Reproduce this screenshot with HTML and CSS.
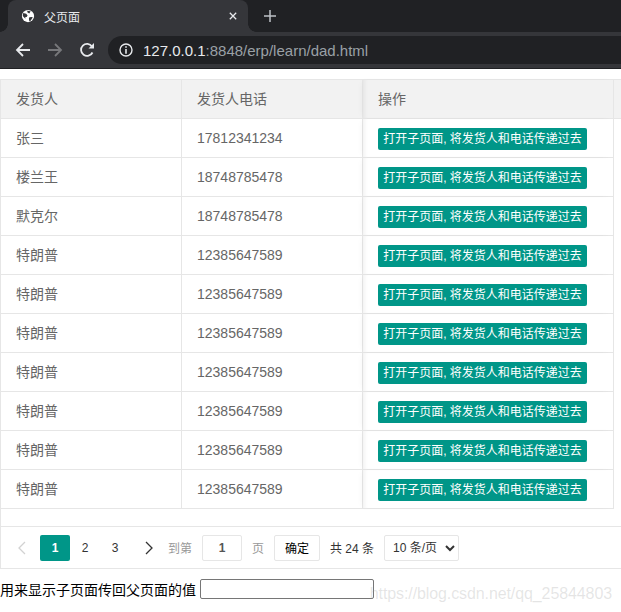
FILE: index.html
```html
<!DOCTYPE html>
<html lang="en">
<head>
  <meta charset="UTF-8" />
  <title>父页面</title>
  <link rel="stylesheet" href="styles.css">
</head>
<body>
  <div class="tabstrip">
    <div class="tab">
      <svg class="tab-icon" viewBox="0 0 16 16"><circle cx="8" cy="8" r="7" fill="#fff"/><path d="M2.500 4.500l3.500 1 1.500 2-1 1.500-1.500 0 0 2-3-3zM9.500 9.500l3-.5 1 .5-2.500 4-1.500.5-.5-3z" fill="#35363a"/><path d="M7 2l4 .5-1.500 2.500-2-1z" fill="#35363a"/></svg>
      <span class="tab-title">父页面</span>
      <svg class="tab-close" viewBox="0 0 10 10"><path d="M1 1l8 8M9 1l-8 8" stroke="#e8eaed" stroke-width="1.600"/></svg>
    </div>
    <svg class="new-tab" viewBox="0 0 12 12"><path d="M6 0v12M0 6h12" stroke="#bdc1c6" stroke-width="1.500"/></svg>
  </div>

  <div class="toolbar">
    <svg class="nav-icon" viewBox="0 0 16 16"><path d="M15 8H2M8 2L2 8l6 6" fill="none" stroke="#e8eaed" stroke-width="1.800"/></svg>
    <svg class="nav-icon" viewBox="0 0 16 16"><path d="M1 8h13M8 2l6 6-6 6" fill="none" stroke="#77787b" stroke-width="1.800"/></svg>
    <svg class="nav-icon" viewBox="0 0 16 16"><path d="M13.500 10.500A6 6 0 1 1 13 4.500" fill="none" stroke="#e8eaed" stroke-width="1.800"/><path d="M9.500 6.500h5.500V1z" fill="#e8eaed"/></svg>
    <div class="omnibox">
      <svg class="info-icon" viewBox="0 0 14 14"><circle cx="7" cy="7" r="6" fill="none" stroke="#e8eaed" stroke-width="1.400"/><path d="M6.200 3.200h1.600v1.500H6.200zM6.200 6h1.600v4.800H6.200z" fill="#e8eaed"/></svg>
      <span class="url-host">127.0.0.1</span><span class="url-rest">:8848/erp/learn/dad.html</span>
    </div>
  </div>

  <div class="page">
    <div class="grid">
      <div class="grid-head">
        <div class="cell col-name">发货人</div>
        <div class="cell col-phone">发货人电话</div>
        <div class="cell col-action">操作</div>
        <div class="col-gutter"></div>
      </div>
      <div id="rows"></div>
      <div class="grid-spacer"></div>
      <div class="pager">
        <svg class="pager-arrow" viewBox="0 0 10 16"><path d="M8 2L2 8l6 6" fill="none" stroke="#d2d2d2" stroke-width="1.300"/></svg>
        <span class="page-num current">1</span>
        <span class="page-num">2</span>
        <span class="page-num">3</span>
        <svg class="pager-arrow next" viewBox="0 0 10 16"><path d="M2 2l6 6-6 6" fill="none" stroke="#333" stroke-width="1.300"/></svg>
        <span class="pager-label goto">到第</span>
        <input class="page-input" type="text" value="1">
        <span class="pager-label unit">页</span>
        <button class="page-ok">确定</button>
        <span class="pager-total">共 24 条</span>
        <select class="page-size"><option>10 条/页</option></select>
      </div>
    </div>
    <div class="result">
      <label for="result">用来显示子页面传回父页面的值</label>
      <input id="result" type="text">
    </div>
    <span class="watermark">https://blog.csdn.net/qq_25844803</span>
  </div>

  <script>
    const data = [
      ["张三", "17812341234"],
      ["楼兰王", "18748785478"],
      ["默克尔", "18748785478"],
      ["特朗普", "12385647589"],
      ["特朗普", "12385647589"],
      ["特朗普", "12385647589"],
      ["特朗普", "12385647589"],
      ["特朗普", "12385647589"],
      ["特朗普", "12385647589"],
      ["特朗普", "12385647589"]
    ];

    document.getElementById("rows").innerHTML = data.map(row => `
      <div class="grid-row">
        <div class="cell col-name">${row[0]}</div>
        <div class="cell col-phone">${row[1]}</div>
        <div class="cell col-action"><a class="send-btn">打开子页面, 将发货人和电话传递过去</a></div>
      </div>`).join("");
  </script>
</body>
</html>
```

FILE: styles.css
```css
* {
  box-sizing: border-box;
}
body {
  margin: 0;
  height: 612px;
  overflow: hidden;
  font-family: "Liberation Sans", "Noto Sans CJK SC", sans-serif;
  background-color: #fff;
}

/* browser chrome */
.tabstrip {
  display: flex;
  align-items: center;
  height: 32px;
  background-color: #202124;
}
.tab {
  position: relative;
  display: flex;
  align-items: center;
  width: 240px;
  height: 32px;
  margin-left: 8px;
  padding: 0 8px 0 13px;
  background-color: #35363a;
  border-radius: 8px 8px 0 0;
}
/* the little flares at the foot of the active tab */
.tab::before,
.tab::after {
  content: "";
  position: absolute;
  bottom: 0;
  width: 8px;
  height: 8px;
}
.tab::before {
  left: -8px;
  background: radial-gradient(circle at 0 0, #202124 7.500px, #35363a 8px);
}
.tab::after {
  right: -8px;
  background: radial-gradient(circle at 100% 0, #202124 7.500px, #35363a 8px);
}
.tab-icon {
  width: 14px;
  height: 14px;
}
.tab-title {
  flex: 1;
  margin-left: 9px;
  font-size: 12px;
  color: #e8eaed;
}
.tab-close {
  width: 8px;
  height: 8px;
  margin-right: 3px;
}
.new-tab {
  width: 12px;
  height: 12px;
  margin-left: 16px;
}
.toolbar {
  display: flex;
  align-items: center;
  height: 37px;
  padding-left: 15px;
  background-color: #35363a;
  border-bottom: 1px solid #202124;
}
.nav-icon {
  width: 16px;
  height: 16px;
  margin-right: 16px;
}
.omnibox {
  display: flex;
  align-items: center;
  flex: 1;
  height: 28px;
  margin-left: -3px;
  padding-left: 11px;
  background-color: #202124;
  border-radius: 14px 0 0 14px;
  font-size: 15px;
}
.info-icon {
  width: 14px;
  height: 14px;
  margin-right: 10px;
}
.url-host {
  color: #e8eaed;
}
.url-rest {
  color: #9aa0a6;
}

/* table */
.page {
  position: relative;
  padding-top: 10px;
}
.grid {
  border: 1px solid #e6e6e6;
  border-right: 0;
  color: #666;
  font-size: 14px;
}
.grid-head {
  display: flex;
  height: 39px;
  background-color: #f2f2f2;
  border-bottom: 1px solid #e6e6e6;
}
.grid-row {
  display: flex;
  width: 613px;
  height: 39px;
  border-bottom: 1px solid #e6e6e6;
  border-right: 1px solid #e6e6e6;
}
.cell {
  display: flex;
  align-items: center;
  padding-left: 15px;
  border-right: 1px solid #e6e6e6;
}
.col-name {
  width: 181px;
  padding-bottom: 2px;
}
.col-phone {
  width: 181px;
}
.grid-head .cell {
  padding-bottom: 2px;
}
.col-action {
  flex: 1;
  padding-top: 2px;
  border-right: 0;
  box-shadow: inset 6px 0 5px -5px rgba(0, 0, 0, 0.07), -3px 0 6px -2px rgba(0, 0, 0, 0.04);
}
.grid-head .col-action {
  flex: 0 0 251px;
  padding-top: 0;
  border-right: 1px solid #e6e6e6;
}
.col-gutter {
  flex: 1;
}
.send-btn {
  display: block;
  width: 209px;
  height: 22px;
  line-height: 22px;
  text-align: center;
  font-size: 12px;
  color: #fff;
  background-color: #009688;
  border-radius: 2px;
  white-space: nowrap;
}
.grid-spacer {
  height: 18px;
  border-bottom: 1px solid #e6e6e6;
}

/* pager */
.pager {
  display: flex;
  align-items: center;
  height: 41px;
  padding-left: 16px;
  font-size: 12px;
  color: #333;
}
.pager-arrow {
  width: 10px;
  height: 16px;
  margin-right: 13px;
}
.pager-arrow.next {
  margin-left: 14px;
  margin-right: 14px;
}
.page-num {
  width: 30px;
  height: 26px;
  line-height: 26px;
  text-align: center;
}
.page-num.current {
  color: #fff;
  font-weight: bold;
  background-color: #009688;
  border-radius: 2px;
}
.pager-label {
  color: #999;
}
.page-input {
  width: 40px;
  height: 26px;
  margin-left: 10px;
  text-align: center;
  font-size: 12px;
  font-weight: bold;
  color: #555;
  border: 1px solid #e6e6e6;
  border-radius: 2px;
}
.pager-label.unit {
  margin: 0 10px;
}
.page-ok {
  width: 46px;
  height: 26px;
  padding: 0;
  font-family: inherit;
  font-size: 12px;
  color: #000;
  background-color: #fff;
  border: 1px solid #e6e6e6;
  border-radius: 2px;
}
.pager-total {
  margin-left: 10px;
}
.page-size {
  width: 75px;
  height: 26px;
  margin-left: 10px;
  padding-left: 4px;
  font-family: inherit;
  font-size: 12px;
  color: #333;
  background-color: #fff;
  border: 1px solid #e6e6e6;
  border-radius: 2px;
}

/* value from the child page */
.result {
  display: flex;
  align-items: center;
  margin-top: 10px;
  font-size: 14px;
  color: #000;
}
.result label {
  margin-right: 4px;
}
.result input {
  width: 174px;
  height: 20px;
  padding: 1px 2px;
  border: 1px solid #767676;
  border-radius: 2px;
}
.watermark {
  position: absolute;
  right: 9px;
  bottom: -4px;
  font-size: 16px;
  letter-spacing: -0.1px;
  color: rgba(150, 150, 150, 0.25);
}
```
